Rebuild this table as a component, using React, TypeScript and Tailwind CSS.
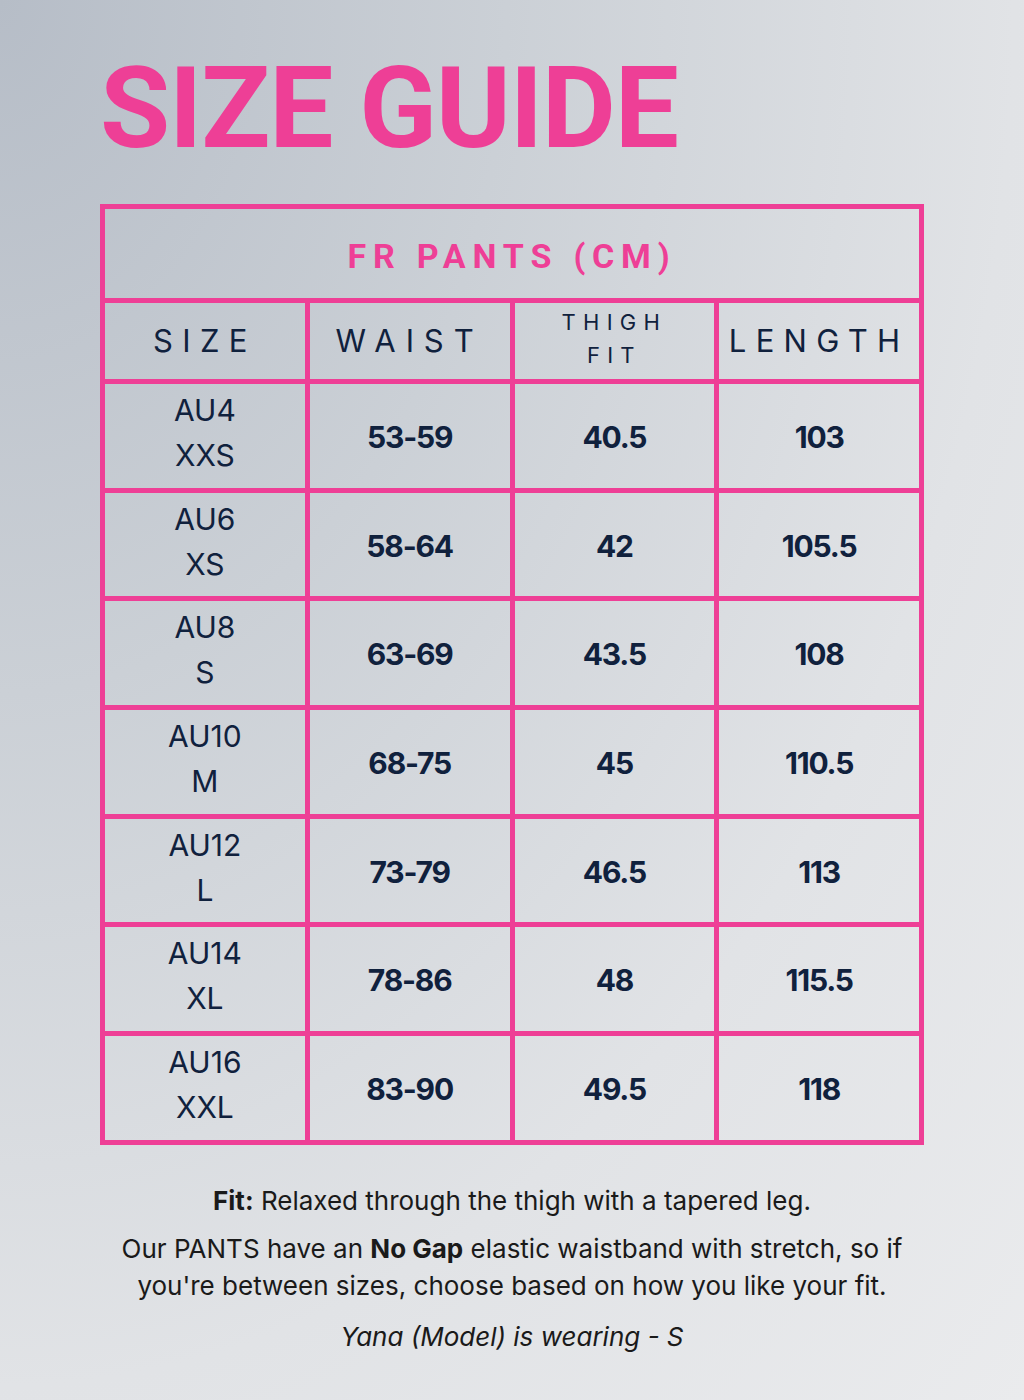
const rows = [
  { au: "AU4", size: "XXS", waist: "53-59", thigh: "40.5", length: "103" },
  { au: "AU6", size: "XS", waist: "58-64", thigh: "42", length: "105.5" },
  { au: "AU8", size: "S", waist: "63-69", thigh: "43.5", length: "108" },
  { au: "AU10", size: "M", waist: "68-75", thigh: "45", length: "110.5" },
  { au: "AU12", size: "L", waist: "73-79", thigh: "46.5", length: "113" },
  { au: "AU14", size: "XL", waist: "78-86", thigh: "48", length: "115.5" },
  { au: "AU16", size: "XXL", waist: "83-90", thigh: "49.5", length: "118" },
]

export default function App() {
  return (
    <div className="min-h-[1400px] w-full bg-[radial-gradient(ellipse_at_top_left,#b6bdc7_0%,#cbd0d6_35%,#e1e3e6_70%,#eaebed_100%)] font-['Inter',sans-serif] text-[#10213d]">
      <div className="px-[100px] pt-[51px]">
        {/* Heading */}
        <h1 className="font-['Roboto',sans-serif] text-[114px] font-bold leading-none tracking-[-1.2px] text-[#ee3f96]">
          SIZE GUIDE
        </h1>

        {/* Table */}
        <table className="mt-[39px] w-[824px] table-fixed border-collapse">
          <thead>
            <tr className="h-[94px]">
              <th
                colSpan={4}
                className="border-[5px] border-[#ee3f96] pt-[6px] text-center font-['Roboto',sans-serif] text-[34px] font-bold tracking-[0.2em] text-[#ee3f96]"
              >
                FR PANTS (CM)
              </th>
            </tr>
            <tr className="h-[81px]">
              <th className="border-[5px] border-[#ee3f96] text-center text-[31px] font-normal tracking-[0.3em]">
                SIZE
              </th>
              <th className="border-[5px] border-[#ee3f96] text-center text-[31px] font-normal tracking-[0.32em]">
                WAIST
              </th>
              <th className="border-[5px] border-[#ee3f96] pb-[5px] text-center text-[22px] font-normal leading-[33px] tracking-[0.33em]">
                THIGH
                <br />
                FIT
              </th>
              <th className="border-[5px] border-[#ee3f96] text-center text-[31px] font-normal tracking-[0.3em]">
                LENGTH
              </th>
            </tr>
          </thead>
          <tbody>
            {rows.map((r) => (
              <tr key={r.au} className="h-[108.7px]">
                <td className="border-[5px] border-[#ee3f96] pb-[6px] text-center text-[30px] leading-[45px]">
                  {r.au}
                  <br />
                  {r.size}
                </td>
                <td className="border-[5px] border-[#ee3f96] pt-[3px] text-center text-[30px] font-bold tracking-[-0.04em]">
                  {r.waist}
                </td>
                <td className="border-[5px] border-[#ee3f96] pt-[3px] text-center text-[30px] font-bold tracking-[-0.04em]">
                  {r.thigh}
                </td>
                <td className="border-[5px] border-[#ee3f96] pt-[3px] text-center text-[30px] font-bold tracking-[-0.04em]">
                  {r.length}
                </td>
              </tr>
            ))}
          </tbody>
        </table>

        {/* Notes */}
        <div className="mt-[39px] w-[824px] text-center text-[26px] text-[#1a1a1a]">
          <p className="leading-[34px]">
            <span className="font-bold">Fit:</span> Relaxed through the thigh with a tapered leg.
          </p>
          <p className="mt-[12px] leading-[37px]">
            Our PANTS have an <span className="font-bold">No Gap</span> elastic waistband with stretch, so if
            <br />
            you're between sizes, choose based on how you like your fit.
          </p>
          <p className="mt-[16px] leading-[34px] italic">Yana (Model) is wearing - S</p>
        </div>
      </div>
    </div>
  )
}
